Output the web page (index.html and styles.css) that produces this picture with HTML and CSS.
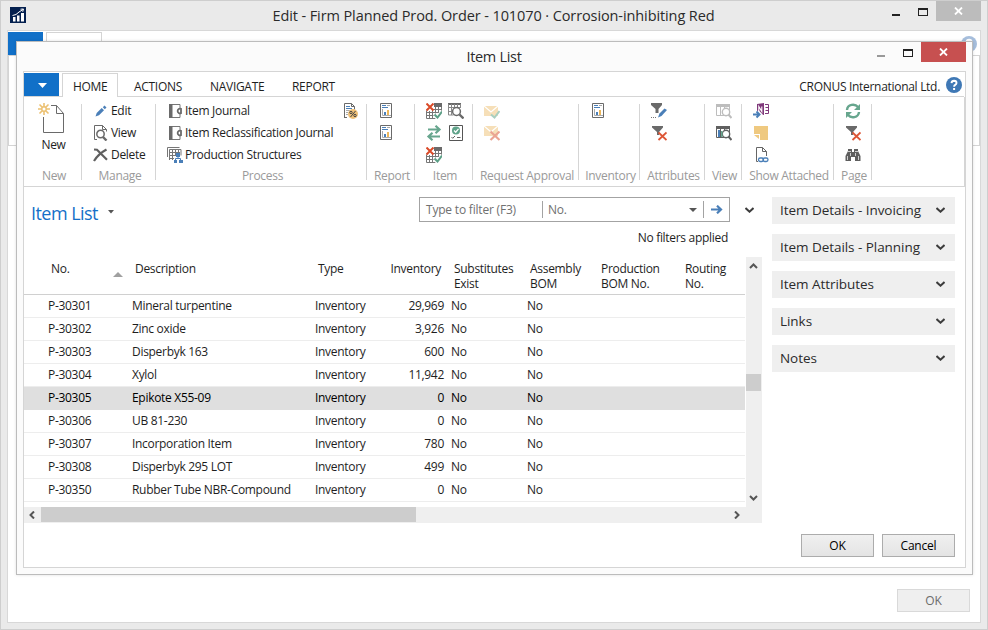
FILE: index.html
```
<!DOCTYPE html>
<html lang="en">
<head>
<meta charset="utf-8">
<title>Item List</title>
<link rel="stylesheet" href="styles.css">
</head>
<body>
<svg class="defs" width="0" height="0">
  <symbol id="journal" viewBox="0 0 16 16"><path d="M3.5 1.500h9.500v3.500M13 11v3.500H3.500" fill="none" stroke="#777"/><path d="M2 1h3.500v14H2z" fill="#6a6a6a"/><path d="M14 5.800a2.400 2.400 0 1 0 0 4.400z" fill="#fff" stroke="#6a6a6a" stroke-width="1.800"/></symbol>
  <symbol id="report" viewBox="0 0 16 16"><path d="M2.500.5h11v14h-11z" fill="#fff" stroke="#6a6a6a"/><path d="M4 2.500h4M4 4.500h6" stroke="#4a7fb8"/><path d="M9 2.500h3" stroke="#aaa"/><path d="M4.500 6v6.500H13" fill="none" stroke="#aaa"/><path d="M6 9h2v3H6z" fill="#4a7fb8"/><path d="M9 7h2v5H9z" fill="#ecb65a"/></symbol>
  <symbol id="gridx" viewBox="0 0 16 16"><path d="M8 0h8v4H8z" fill="#6a6a6a"/><path d="M.5 7.500v8h9M.5 9.500h10M.5 12.500h9M3.500 8v7M6.500 7v8M9.500 4v10M12.500 4v6M15.500 4v5M7 6.500h9M9 9.500h6" fill="none" stroke="#777"/><path d="M.5.500l7 7M7.500.5l-7 7" stroke="#da4a28" stroke-width="2"/><path d="M8.500 11.500l3 3 5-6" fill="none" stroke="#fff" stroke-width="4"/><path d="M8.500 11.500l3 3 4.500-6" fill="none" stroke="#5c9f86" stroke-width="2"/></symbol>
  <symbol id="funnelx" viewBox="0 0 16 16"><path d="M1 1h11v1.500L8 7v3H6V7L1 2.500z" fill="#6a6a6a"/><path d="M7.500 7.500l8 7.500M15.500 7.500l-8 7.500" stroke="#dd5535" stroke-width="1.800"/></symbol>
  <symbol id="lens" viewBox="0 0 16 16"><path d="M.5 1.500h13v11H.5z" fill="#fff" stroke="currentColor"/><path d="M0 1h14v3H0zM4 4h1v8H4zM8 4h1v8H8z" fill="currentColor"/><circle cx="10" cy="9" r="3.700" fill="#fff" stroke="currentColor" stroke-width="1.400"/><path d="M12.500 11.500l3 3.500" stroke="currentColor" stroke-width="2"/></symbol>
  <symbol id="mail" viewBox="0 0 16 16"><path d="M0 3h14v10H0z" fill="#f6dfb8"/><path d="M0 3l7 6 7-6" fill="none" stroke="#fff" stroke-width="1.200"/></symbol>
  <symbol id="help" viewBox="0 0 16 16"><circle cx="8" cy="8" r="8" fill="currentColor"/><path d="M5.500 6.200Q5.700 3.800 8.100 3.800 10.500 3.900 10.500 6 10.500 7.200 9.200 7.900 8.100 8.500 8.100 9.700" fill="none" stroke="#fff" stroke-width="1.900"/><path d="M7.100 11h2v2h-2z" fill="#fff"/></symbol>
  <symbol id="down" viewBox="0 0 9 6"><path d="M0.500 1l4 3.700 4-3.700" fill="none" stroke="#3c3c3c" stroke-width="2"/></symbol>
</svg>

<div class="window">
  <header class="titlebar">
    <svg class="app-icon" viewBox="0 0 16 16"><path d="M0 0h16v16H0z" fill="#04204f"/><path d="M3 10h2.500v4.500H3zM7 8.500h2.500v6H7zM11 6h3v8.500h-3z" fill="#fff"/><path d="M2.500 8.500l3.500-1 3-2.500 4-2.500M10.500 2.200l3-.2-.8 2.800" fill="none" stroke="#fff"/></svg>
    <h1 class="caption main-caption">Edit - Firm Planned Prod. Order - 101070 · Corrosion-inhibiting Red</h1>
    <div class="controls">
      <i class="min"></i><i class="max"></i>
      <span class="close grey"><svg width="9" height="8" viewBox="0 0 9 8"><path d="M1 .5l7 7M8 .5l-7 7" stroke="#fff" stroke-width="1.800"/></svg></span>
    </div>
  </header>
  <main class="back">
    <div class="back-tabs"><b class="file"></b><b class="tab-outline"></b></div>
    <div class="back-ribbon"></div>
    <button class="btn disabled">OK</button>
    <svg class="back-help"><use href="#help"/></svg>
  </main>
</div>

<section class="dialog">
  <header class="dialog-title">
    <h2 class="caption">Item List</h2>
    <div class="controls">
      <i class="min dim"></i><i class="max"></i>
      <span class="close"><svg width="9" height="8" viewBox="0 0 9 8"><path d="M1 .5l7 7M8 .5l-7 7" stroke="#fff" stroke-width="1.800"/></svg></span>
    </div>
  </header>
  <div class="panel">
    <nav class="tabs">
      <span class="file"><svg width="9" height="5"><path d="M0 0h9L4.500 5z" fill="#fff"/></svg></span>
      <span class="tab active">HOME</span><span class="tab t2">ACTIONS</span><span class="tab t3">NAVIGATE</span><span class="tab t4">REPORT</span>
      <span class="company">CRONUS International Ltd.</span>
      <svg class="help"><use href="#help"/></svg>
    </nav>
    <div class="ribbon">
      <div class="group g-new">
        <div class="big">
          <svg width="28" height="31" viewBox="0 0 28 31"><path d="M5.500 14v15.500h20V10.500l-7-8H13M18.500 2.500v8h7" fill="#fff" stroke="#6a6a6a"/><path d="M6 0v12M0 6h12M1.500 1.500l9 9M10.500 1.500l-9 9" stroke="#ecc172" stroke-width="1.600"/><circle cx="6" cy="6" r="2.200" fill="#fff" stroke="#ecc172" stroke-width="1.400"/></svg>
          <span>New</span>
        </div>
        <label>New</label>
      </div>
      <div class="group g-manage">
        <div class="rows">
          <div class="cmd"><svg viewBox="0 0 16 16"><path d="M2.500 13.500l1.200-3.500 5-5L11 7.200l-5 5z" fill="#4a7fb8"/><path d="M9.800 4.200L11.500 2.500l2 2-1.700 1.700z" fill="#4a7fb8"/></svg>Edit</div>
          <div class="cmd"><svg viewBox="0 0 16 16"><path d="M4 14.500H1.500V.5h8l4 4v2M9.500.5v4h4" fill="none" stroke="#6a6a6a"/><circle cx="7.500" cy="9" r="3.700" fill="none" stroke="#6a6a6a" stroke-width="1.500"/><path d="M10 12l3.500 3.500" stroke="#6a6a6a" stroke-width="2.400"/></svg>View</div>
          <div class="cmd"><svg viewBox="0 0 16 16"><path d="M1 2.500l3 .2 10 10M13.500 2.500C8 5.500 4 9 1 14" fill="none" stroke="#606060" stroke-width="2.200"/></svg>Delete</div>
        </div>
        <label>Manage</label>
      </div>
      <div class="group g-process">
        <div class="rows">
          <div class="cmd"><svg><use href="#journal"/></svg>Item Journal</div>
          <div class="cmd"><svg><use href="#journal"/></svg>Item Reclassification Journal</div>
          <div class="cmd"><svg viewBox="0 0 16 16"><path d="M.5 10V.5h12M2.500 13V2.500H14v6M3 5.500h10M3 8.500h6M3 11.500h4M5.500 3v10M8.500 3v6M11.500 3v3" fill="none" stroke="#777"/><path d="M9 6h4v4H9zM7 13h3v3H7zM12 13h4v3h-4z" fill="#4a7fb8"/><path d="M11 10v2M8.500 13v-1.500h5V13" fill="none" stroke="#4a7fb8"/></svg>Production Structures</div>
        </div>
        <svg class="tax" viewBox="0 0 16 16"><path d="M2.500 14.500V.5h7l3 3v3M9.500.5v3h3M5 14.500H2" fill="none" stroke="#6a6a6a"/><path d="M4 3.500h4M4 5.500h6" stroke="#4a7fb8"/><path d="M4 7.500h4M4 9.500h2M4 11.500h2" stroke="#aaa"/><circle cx="11" cy="11" r="5" fill="#efc078"/><path d="M13.500 8l-5 6" stroke="#444"/><circle cx="9" cy="9.500" r="1.200" fill="none" stroke="#444"/><circle cx="13" cy="12.500" r="1.200" fill="none" stroke="#444"/></svg>
        <label>Process</label>
      </div>
      <div class="group g-report">
        <div class="icons"><svg><use href="#report"/></svg><svg><use href="#report"/></svg></div>
        <label>Report</label>
      </div>
      <div class="group g-item">
        <div class="icons two">
          <svg><use href="#gridx"/></svg>
          <svg viewBox="0 0 16 16"><path d="M0 0h13v2H0z" fill="#6a6a6a"/><path d="M.5 1v11h5M.5 4.500h12M.5 8.500h4M3.500 1v11M6.500 1v4M9.500 1v4M12.500 1v4" fill="none" stroke="#888"/><circle cx="8.500" cy="8.500" r="3.900" fill="#fff" stroke="#6a6a6a" stroke-width="1.500"/><path d="M11.500 11.500l4 4" stroke="#6a6a6a" stroke-width="2.400"/></svg>
          <svg viewBox="0 0 16 16"><path d="M2 4.500h12M9.500.8l4 3.700-4 3.700M14 11.500H2M6.500 7.800l-4 3.700 4 3.700" fill="none" stroke="#67a68e" stroke-width="2.200"/></svg>
          <svg viewBox="0 0 16 16"><path d="M1.500.5h13v15h-13z" fill="#fff" stroke="#555"/><circle cx="8" cy="5.500" r="4" fill="#5fa38a"/><path d="M6 5.500l1.700 1.700L10.500 3.800" fill="none" stroke="#fff" stroke-width="1.300"/><path d="M3.500 12l1.200 1.300L7 11M9 12.500h3.500" fill="none" stroke="#666"/></svg>
          <svg><use href="#gridx"/></svg>
        </div>
        <label>Item</label>
      </div>
      <div class="group g-approval">
        <div class="icons">
          <svg viewBox="0 0 16 16"><use href="#mail"/><path d="M7 11.500l3.500 3L15.500 8" fill="none" stroke="#a9cfc0" stroke-width="2"/></svg>
          <svg viewBox="0 0 16 16"><use href="#mail" y="-2"/><path d="M6.500 6.500l9 8.500M15.500 6.500l-9 8.500" stroke="#eaa593" stroke-width="2.200"/></svg>
        </div>
        <label>Request Approval</label>
      </div>
      <div class="group g-inventory">
        <div class="icons"><svg><use href="#report"/></svg></div>
        <label>Inventory</label>
      </div>
      <div class="group g-attributes">
        <div class="icons">
          <svg viewBox="0 0 16 16"><path d="M0 0h11v2L7.500 6v4h-3V6L0 2z" fill="#6a6a6a"/><path d="M7 14.500l1.500-4 5-5L16 7l-5.500 6z" fill="#4a7fb8"/><path d="M0 14.500h6" stroke="#777" stroke-dasharray="1 1"/></svg>
          <svg><use href="#funnelx"/></svg>
        </div>
        <label>Attributes</label>
      </div>
      <div class="group g-view">
        <div class="icons"><svg class="faint"><use href="#lens"/></svg><svg class="strong" viewBox="0 0 16 16"><use href="#lens"/><path d="M2 5h2v7H2z" fill="#4a7fb8"/><path d="M5 6h1.500v6H5z" fill="#67a68e"/></svg></div>
        <label>View</label>
      </div>
      <div class="group g-attached">
        <div class="icons">
          <svg viewBox="0 0 16 16"><path d="M4 1l7-1v12l-7-1z" fill="#80397b"/><path d="M12 1.500h3.500v9H12M12.500 4.500h3M12.500 7.500h3" fill="none" stroke="#80397b"/><path d="M5.800 8.500V3.500l3 5v-5" fill="none" stroke="#fff" stroke-width="1.100"/><path d="M0 11.500h6M4 8.500l3 3-3 3" fill="none" stroke="#fff" stroke-width="4"/><path d="M0 11.500h6M3.500 8.500l3 3-3 3" fill="none" stroke="#4a7fb8" stroke-width="2"/></svg>
          <svg viewBox="0 0 16 16"><path d="M1 1h14v14H7V9H1z" fill="#efc980"/><path d="M1 10h5v4z" fill="#efc980"/></svg>
          <svg viewBox="0 0 16 16"><path d="M5 14.500H3.500V.5h6l4 4V9M9.500.5v4h4" fill="none" stroke="#666"/><rect x="5.500" y="11" width="5" height="3.500" rx="1.700" fill="none" stroke="#4a7fb8" stroke-width="1.300"/><rect x="10" y="11" width="5" height="3.500" rx="1.700" fill="none" stroke="#4a7fb8" stroke-width="1.300"/></svg>
        </div>
        <label>Show Attached</label>
      </div>
      <div class="group g-page">
        <div class="icons">
          <svg viewBox="0 0 16 16"><path d="M2 7C2.500 1 10 .5 13 4M14 9C13.500 15 6 15.500 3 12" fill="none" stroke="#67a68e" stroke-width="2.400"/><path d="M15 1v6H9zM1 15V9h6z" fill="#67a68e"/></svg>
          <svg><use href="#funnelx"/></svg>
          <svg viewBox="0 0 16 16"><path d="M3 2h4v3h2V2h4v2l2.500 5v5H10v-4H6v4H.5V9L3 4z" fill="#5e5e5e"/><path d="M3 4.500h3M10 4.500h3M5.500 6v3M10.500 6v3M2.500 9v4M13.500 9v4" stroke="#fff" stroke-width=".7"/></svg>
        </div>
        <label>Page</label>
      </div>
    </div>

    <div class="content">
      <div class="list">
        <div class="list-head">
          <div class="list-title">Item List<svg width="6" height="4"><path d="M0 0h6L3 3.500z" fill="#555"/></svg></div>
          <div class="filter">
            <span class="query">Type to filter (F3)</span>
            <span class="field">No.<svg width="8" height="4"><path d="M0 0h8L4 4z" fill="#555"/></svg></span>
            <span class="go"><svg width="12" height="9" viewBox="0 0 12 9"><path d="M0 4.500h10M6 .7l4 3.800-4 3.800" fill="none" stroke="#4a7fb8" stroke-width="2.200"/></svg></span>
          </div>
          <svg class="expand" width="9" height="6"><use href="#down"/></svg>
        </div>
        <div class="status">No filters applied</div>
        <div class="grid-area">
          <div class="table">
            <div class="row head"><span>No.<svg class="sort" width="10" height="5"><path d="M0 5h10L5 0z" fill="#a0a0a0"/></svg></span><span>Description</span><span>Type</span><span class="num">Inventory</span><span>Substitutes<br>Exist</span><span>Assembly<br>BOM</span><span>Production<br>BOM No.</span><span>Routing<br>No.</span></div>
            <div class="row"><span>P-30301</span><span>Mineral turpentine</span><span>Inventory</span><span class="num">29,969</span><span>No</span><span>No</span></div>
            <div class="row"><span>P-30302</span><span>Zinc oxide</span><span>Inventory</span><span class="num">3,926</span><span>No</span><span>No</span></div>
            <div class="row"><span>P-30303</span><span>Disperbyk 163</span><span>Inventory</span><span class="num">600</span><span>No</span><span>No</span></div>
            <div class="row"><span>P-30304</span><span>Xylol</span><span>Inventory</span><span class="num">11,942</span><span>No</span><span>No</span></div>
            <div class="row selected"><span>P-30305</span><span>Epikote X55-09</span><span>Inventory</span><span class="num">0</span><span>No</span><span>No</span></div>
            <div class="row"><span>P-30306</span><span>UB 81-230</span><span>Inventory</span><span class="num">0</span><span>No</span><span>No</span></div>
            <div class="row"><span>P-30307</span><span>Incorporation Item</span><span>Inventory</span><span class="num">780</span><span>No</span><span>No</span></div>
            <div class="row"><span>P-30308</span><span>Disperbyk 295 LOT</span><span>Inventory</span><span class="num">499</span><span>No</span><span>No</span></div>
            <div class="row"><span>P-30350</span><span>Rubber Tube NBR-Compound</span><span>Inventory</span><span class="num">0</span><span>No</span><span>No</span></div>
          </div>
          <div class="vscroll">
            <svg width="9" height="6" viewBox="0 0 9 6"><path d="M1 5l3.500-3.500L8 5" fill="none" stroke="#555" stroke-width="2"/></svg>
            <b class="thumb"></b>
            <svg class="dn" width="9" height="6" viewBox="0 0 9 6"><path d="M1 1l3.500 3.500L8 1" fill="none" stroke="#555" stroke-width="2"/></svg>
          </div>
          <div class="hscroll">
            <svg width="6" height="8" viewBox="0 0 6 8"><path d="M5 .5L1.500 4 5 7.500" fill="none" stroke="#555" stroke-width="2"/></svg>
            <b class="thumb"></b>
            <svg class="rt" width="6" height="8" viewBox="0 0 6 8"><path d="M1 .5L4.500 4 1 7.500" fill="none" stroke="#555" stroke-width="2"/></svg>
          </div>
        </div>
      </div>
      <aside class="facts">
        <div>Item Details - Invoicing<svg><use href="#down"/></svg></div>
        <div>Item Details - Planning<svg><use href="#down"/></svg></div>
        <div>Item Attributes<svg><use href="#down"/></svg></div>
        <div>Links<svg><use href="#down"/></svg></div>
        <div>Notes<svg><use href="#down"/></svg></div>
      </aside>
    </div>
    <footer class="actions"><button class="btn">OK</button><button class="btn cancel">Cancel</button></footer>
  </div>
</section>
</body>
</html>
```
FILE: styles.css
```
* { box-sizing: border-box; }
body { margin: 0; width: 988px; height: 630px; overflow: hidden; font: 12px/15px "Open Sans", "Noto Sans", sans-serif; letter-spacing: -0.3px; color: #1e1e1e; }
svg { display: block; flex: none; }
.defs { position: absolute; }
i, b { display: block; }

.window { width: 988px; height: 630px; border: 1px solid #cecece; background: #eaeaea; padding: 0 6px 6px; display: flex; flex-direction: column; }
.titlebar { height: 29px; display: flex; flex: none; position: relative; }
.app-icon { width: 16px; height: 16px; margin: 6px 0 0 3px; }
.caption { margin: 0; flex: 1; text-align: center; font-size: 14.5px; line-height: 20px; font-weight: 400; color: #2b2b2b; }
.main-caption { padding: 5px 0 0 69px; letter-spacing: -0.1px; }
.controls { display: flex; }
.min { width: 8px; height: 2px; background: #222; margin: 13px 18px 0 0; }
.min.dim { background: #999; }
.max { width: 10px; height: 8px; border: 1px solid #222; border-top-width: 2px; margin: 7px 8px 0 0; }
.close { width: 45px; height: 20px; background: #c75050; display: flex; align-items: center; justify-content: center; }
.close.grey { background: #bcbcbc; }
.back { flex: 1; background: #fff; border: 1px solid #d8d8d8; position: relative; display: flex; flex-direction: column; padding-top: 1px; }
.back-tabs { display: flex; gap: 3px; height: 23px; flex: none; }
.file { width: 35px; height: 23px; background: #1170c8; display: flex; align-items: center; justify-content: center; }
.tab-outline { width: 56px; border: 1px solid #d4d4d4; border-bottom: 0; }
.back-ribbon { height: 91px; border: 1px solid #d4d4d4; }
.back-help { position: absolute; width: 16px; height: 16px; right: 3px; top: 5px; color: #a6bedc; }
.btn { font: inherit; letter-spacing: -0.2px; width: 73px; height: 23px; padding: 0; border: 1px solid #acacac; background: linear-gradient(#f0f0f0, #e4e4e4); color: #000; }
.disabled { margin: auto 10px 10px auto; border-color: #d9d9d9; background: #efefef; color: #6b6b6b; }

.dialog { position: absolute; left: 16px; top: 41px; width: 957px; height: 534px; background: #fbfbfb; border: 1px solid #bcbcbc; box-shadow: 0 0 3px rgba(0,0,0,.13); padding: 0 6px 6px; display: flex; flex-direction: column; }
.dialog-title { height: 29px; display: flex; flex: none; }
.dialog-title .caption { padding: 5px 0 0 88px; }
.panel { flex: 1; border: 1px solid #d5d5d5; background: #fff; display: flex; flex-direction: column; padding-top: 1px; }
.tabs { display: flex; height: 24px; flex: none; border-bottom: 1px solid #d5d5d5; margin-right: 1px; }
.tab { line-height: 27px; }
.active { height: 24px; width: 56px; margin: 0 16px 0 3px; padding-left: 10px; border: 1px solid #d5d5d5; border-bottom: 0; background: #fff; line-height: 25px; }
.tabs .file svg { margin: 2px 0 0 2px; }
.t2 { width: 76px; } .t3 { width: 82px; }
.company { margin-left: auto; line-height: 27px; margin-right: 6px; }
.help { width: 16px; height: 16px; margin: 4px 2px 0 0; color: #3f78b5; }

.ribbon { height: 90px; flex: none; display: flex; border-bottom: 1px solid #d5d5d5; border-right: 1px solid #d5d5d5; }
.group { display: flex; flex-wrap: wrap; align-content: flex-start; padding-top: 3px; border-right: 1px solid #d5d5d5; height: 76px; margin-top: 7px; }
.group > * { margin-top: -7px; }
.group label { width: 100%; height: 20px; line-height: 20px; padding-left: 3px; text-align: center; color: #9a9a9a; margin-top: 0; white-space: nowrap; }
.rows, .icons, .big { height: 66px; }
.cmd { height: 22px; display: flex; align-items: center; gap: 2px; white-space: nowrap; line-height: 22px; }
.cmd svg, .icons svg, .tax { width: 16px; height: 16px; }
.icons { display: grid; grid-template-columns: 16px; grid-auto-rows: 22px; align-items: center; padding-left: 11px; }
.icons.two { grid-template-columns: 16px 16px; column-gap: 6px; }
.g-new { width: 58px; } .g-manage { width: 74px; } .g-process { width: 211px; } .g-report { width: 48px; }
.g-item { width: 58px; } .g-approval { width: 106px; } .g-inventory { width: 61px; } .g-attributes { width: 65px; }
.g-view { width: 37px; } .g-attached { width: 92px; } .g-page { width: 38px; }
.big { width: 100%; padding: 3px 0 0 2px; display: flex; flex-direction: column; align-items: center; line-height: 20px; }
.big svg { margin: 0 0 1px -4px; }
.g-manage .rows { padding-left: 11px; }
.g-process .rows { padding-left: 11px; width: 186px; }
.group > .tax { margin-top: -4px; }
.faint { color: #bdbdbd; } .strong { color: #606060; }

.content { display: flex; flex: none; height: 336px; }
.list { width: 738px; }
.list-head { display: flex; padding-top: 10px; height: 36px; }
.list-title { display: flex; align-items: center; gap: 10px; width: 395px; padding: 6px 0 0 7px; font-size: 18px; letter-spacing: -0.55px; color: #1470c8; }
.list-title svg { margin-top: -3px; }
.filter { display: flex; width: 311px; height: 25px; border: 1px solid #a3a3a3; padding: 3px 0; color: #707070; line-height: 17px; }
.query { width: 123px; padding-left: 6px; letter-spacing: -0.2px; border-right: 1px solid #a3a3a3; }
.field { flex: 1; display: flex; justify-content: space-between; align-items: center; padding: 0 6px 0 5px; border-right: 1px solid #a3a3a3; }
.go { width: 25px; display: flex; align-items: center; justify-content: center; }
.expand { margin: 10px 0 0 15px; }
.status { padding-right: 34px; text-align: right; line-height: 16px; padding-top: 7px; height: 34px; }
.grid-area { display: grid; grid-template-columns: 722px 16px; grid-template-rows: 250px 16px; }
.table { margin-right: 1px; }
.row { display: grid; grid-template-columns: 84px 183px 76px 60px 76px 71px 84px 1fr; padding-left: 20px; height: 23px; line-height: 22px; border-bottom: 1px solid #ededed; white-space: nowrap; }
.row span { padding: 0 3px 0 4px; }
.row .num { text-align: right; }
.head { height: 38px; line-height: 15px; padding-top: 4px; border-color: #d0d0d0; }
.head span { padding: 0 6px 0 7px; position: relative; }
.head .num { padding-left: 0; }
.sort { position: absolute; left: 69px; top: 11px; }
.selected { background: #dfdfdf; border-color: #dfdfdf; color: #000; }
.vscroll { background: #efefef; display: flex; flex-direction: column; align-items: center; padding: 6px 1px 0 0; }
.vscroll .thumb { width: 15px; height: 17px; background: #cdcdcd; margin-top: 105px; }
.vscroll .dn { margin-top: 104px; }
.hscroll { grid-column: 1 / 3; background: #efefef; display: flex; align-items: center; padding: 0 22px 1px 5px; }
.hscroll .thumb { width: 375px; height: 15px; margin: 0 auto 0 6px; background: #cdcdcd; }
.facts { padding: 10px 0 0 10px; display: flex; flex-direction: column; gap: 10px; width: 193px; }
.facts div { height: 27px; background: #efefef; padding: 0 10px 0 8px; display: flex; justify-content: space-between; align-items: center; font-size: 13.5px; color: #2b2b2b; letter-spacing: -0.05px; }
.facts svg { width: 9px; height: 6px; margin-top: -1px; }
.actions { display: flex; justify-content: flex-end; gap: 8px; padding: 11px 10px 0 0; }
```
